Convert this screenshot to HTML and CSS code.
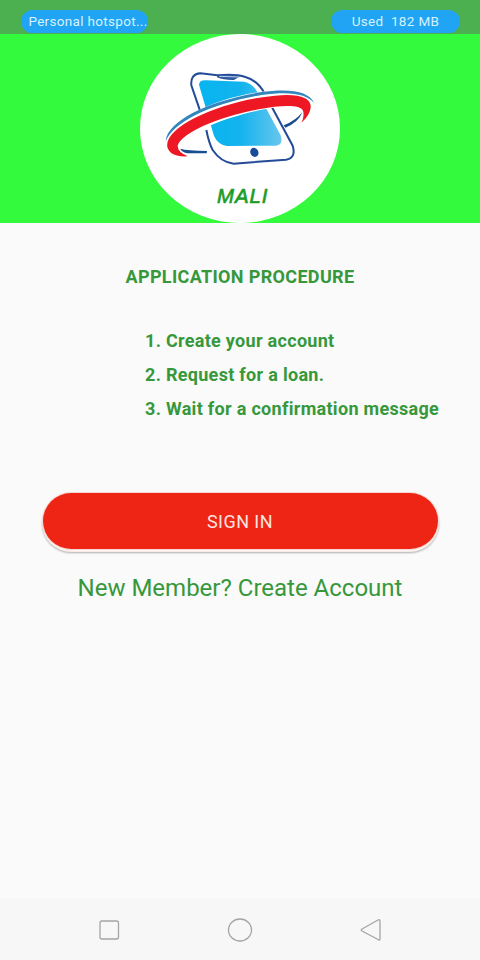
FILE: index.html
```html
<!DOCTYPE html>
<html lang="en">
<head>
  <meta charset="UTF-8">
  <meta name="viewport" content="width=device-width, initial-scale=1.0">
  <title>Mali</title>
  <link rel="stylesheet" href="styles.css">
</head>
<body>

<div class="status-bar">
  <span class="pill hotspot">Personal hotspot...</span>
  <span class="pill usage">Used&nbsp; 182 MB</span>
</div>

<header class="banner">
  <svg class="logo" viewBox="30 12 600 567" role="img" aria-label="Mali">
    <defs>
      <linearGradient id="screen" x1="0" y1="0" x2="1" y2="0">
        <stop offset="0" stop-color="#08b5f0"/>
        <stop offset="0.5" stop-color="#12b3ee"/>
        <stop offset="1" stop-color="#68c6ee"/>
      </linearGradient>
    </defs>
    <ellipse cx="330" cy="295.500" rx="300" ry="283.500" fill="#fff"/>
    <!-- phone -->
    <path d="M211 245 L184 166 Q181 132 211 130 L262 136 Q318 131 346 141 Q383 151 403 189 L488 347 Q499 384 468 389 L311 401 Q273 397 248 360 Q237 340 229 300" fill="#fff" stroke="#234b98" stroke-width="6"/>
    <path d="M261 137 Q292 131 332 138 L312 150 Q282 151 261 142Z" fill="#31579d"/>
    <path d="M268 139 L328 141" stroke="#b8d6f0" stroke-width="3"/>
    <path d="M207 164 Q208 150 228 151 L342 155 Q366 159 380 183 L452 316 Q461 345 438 347 L290 348 Q263 343 252 318 Z" fill="url(#screen)"/>
    <ellipse cx="373" cy="367" rx="12" ry="14" fill="#194b9b" transform="rotate(-25 373 367)"/>
    <!-- swoosh -->
    <path d="M108 348 C99 270 280 190 440 181 C510 178 552 190 553 225 L517 276 C539 237 514 223 440 232 C350 243 185 290 149 352 L162 378 C130 379 110 369 108 348Z" fill="#fff"/>
    <path d="M107 334 C112 270 242 212 390 187 C477 174 537 182 553 220 C531 191 479 183 395 195 C248 218 129 276 107 334Z" fill="#3386bd"/>
    <path d="M112 351 C101 287 284 210 435 197 C507 190 545 203 542 233 Q540 255 514 278 Q524 260 519 242 C510 223 452 226 386 238 C268 260 157 307 143 347 Q142 366 173 379 Q120 382 112 351Z" fill="#ed1823"/>
    <path d="M151 356 Q172 362 231 363 L230 370 L174 370 Q154 366 151 356Z" fill="#194d91"/>
    <path d="M461 286 Q499 271 517 246 Q507 276 466 293Z" fill="#194d91"/>
    <text class="logo-name" x="261" y="518" textLength="151">MALI</text>
  </svg>
</header>

<main class="content">
  <h1>APPLICATION PROCEDURE</h1>
  <ol class="steps">
    <li>1. Create your account</li>
    <li>2. Request for a loan.</li>
    <li>3. Wait for a confirmation message</li>
  </ol>
  <button class="sign-in">SIGN IN</button>
  <a class="create-account">New Member? Create Account</a>
</main>

<nav class="nav-bar">
  <svg viewBox="0 0 26 26"><rect x="4" y="4" width="18.500" height="18" rx="2"/></svg>
  <svg viewBox="0 0 26 26"><ellipse cx="13" cy="13" rx="11.500" ry="11"/></svg>
  <svg viewBox="0 0 26 26"><path d="M4 12 L20.500 2.800 Q22 2.200 22 4.500 V21.500 Q22 24 20.500 22.700 L4 14 Q2.500 13 4 12Z"/></svg>
</nav>

</body>
</html>
```

FILE: styles.css
```css
* {
  box-sizing: border-box;
}
body {
  margin: 0;
  background-color: #fafafa;
  color: #36983b;
  font-family: Roboto, "Liberation Sans", sans-serif;
  display: flex;
  flex-direction: column;
  height: 960px;
}
.status-bar {
  background-color: #4caf50;
  height: 34px;
  padding: 10px 20px 0 21px;
  display: flex;
  justify-content: space-between;
}
.pill {
  background-color: #20a4f3;
  color: #d5f2ff;
  height: 23px;
  border-radius: 12px;
  font-size: 13.5px;
  line-height: 23px;
  text-align: center;
  white-space: nowrap;
}
.hotspot {
  width: 127px;
  padding-left: 7px;
  letter-spacing: 0.32px;
}
.usage {
  width: 129px;
  letter-spacing: 0.35px;
}
.banner {
  background-color: #33fa3c;
  height: 189px;
  display: flex;
  justify-content: center;
}
.logo {
  width: 200px;
  height: 189px;
}
.logo-name {
  font-family: "Liberation Sans", sans-serif;
  font-size: 61px;
  font-style: italic;
  fill: #1b9c27;
  stroke: #1b9c27;
  stroke-width: 2px;
}
.content {
  flex-grow: 1;
  display: flex;
  flex-direction: column;
  align-items: center;
}
h1 {
  margin: 42px 0 0;
  font-size: 18px;
  font-weight: 700;
  line-height: 24px;
  letter-spacing: 0.34px;
}
.steps {
  list-style: none;
  align-self: flex-start;
  margin: 35px 0 0 145px;
  padding: 0;
  font-size: 18px;
  font-weight: 700;
  line-height: 34px;
  letter-spacing: 0.3px;
  font-variant-ligatures: none;
  white-space: nowrap;
}
.sign-in {
  width: 395px;
  height: 56px;
  margin: 67px 0 0;
  padding: 0;
  border: none;
  border-radius: 28px;
  background-color: #ee2414;
  color: #ffe5e0;
  font-family: inherit;
  font-size: 18px;
  letter-spacing: 0.45px;
  box-shadow: 0 0 0 1px #f5d8d3, 0 2px 1px 1px #fff3f0, 0 3px 2px 1px #aaa;
}
.create-account {
  margin-top: 24px;
  font-size: 24px;
  line-height: 31px;
}
.nav-bar {
  height: 61px;
  background-color: #f7f7f7;
  display: flex;
  justify-content: center;
  align-items: center;
  gap: 105px;
}
.nav-bar svg {
  width: 26px;
  height: 26px;
  fill: none;
  stroke: #a5a5a5;
  stroke-width: 1.3;
}
```
